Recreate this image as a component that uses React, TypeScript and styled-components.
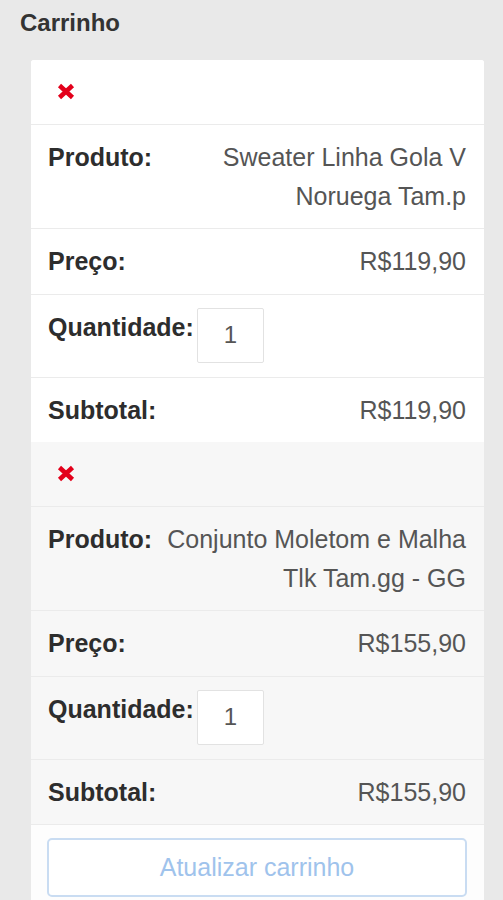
import React from "react";
import styled, {createGlobalStyle} from "styled-components";

const GlobalStyle = createGlobalStyle`
	html, body {
		margin: 0;
		padding: 0;
		background: #e9e9e9;
	}
	body {
		font-family: "Liberation Sans", Arial, sans-serif;
		color: #555;
	}
`;

const Page = styled.main`
	padding: 9px 19px 0 20px;
`;

const Title = styled.h2`
	margin: 0 0 23px;
	font-size: 24px;
	line-height: 28px;
	font-weight: 700;
	color: #333;
`;

const Card = styled.section`
	margin-left: 11px;
	background: #fff;
	border-radius: 3px;
	overflow: hidden;
`;

const Item = styled.div<{$striped?: boolean}>`
	background: ${({$striped}) => ($striped ? "#f7f7f7" : "#fff")};
	& + & > div:first-child {
		border-top: 1px solid #ebebeb;
	}
`;

const Row = styled.div<{$start?: boolean}>`
	display: flex;
	justify-content: ${({$start}) => ($start ? "flex-start" : "space-between")};
	align-items: flex-start;
	gap: ${({$start}) => ($start ? "3px" : "11px")};
	padding: 13px 18px ${({$start}) => ($start ? "14px" : "13px")} 17px;
	font-size: 25px;
	line-height: 38px;
	& + & {
		border-top: 1px solid #ebebeb;
	}
`;

const RemoveRow = styled(Row)`
	align-items: center;
	padding-top: 11px;
	padding-bottom: 14px;
	&:first-child {
		padding-top: 12px;
	}
`;

const Label = styled.span`
	flex: none;
	font-weight: 700;
	color: #2d2d2d;
`;

const Value = styled.span`
	flex: 0 1 auto;
	text-align: right;
	line-height: 38.5px;
	color: #555;
`;

const RemoveLink = styled.a`
	display: flex;
	align-items: center;
	height: 38px;
	margin-left: 9px;
	color: #e3001b;
	cursor: pointer;
`;

const QtyInput = styled.input`
	box-sizing: border-box;
	width: 67px;
	height: 55px;
	border: 1px solid #e2e2e2;
	border-radius: 2px;
	background: #fff;
	font-family: inherit;
	font-size: 24px;
	color: #555;
	text-align: center;
	padding: 0;
`;

const Actions = styled.div`
	border-top: 1px solid #ebebeb;
	padding: 13px 17px 14px 16px;
	background: #fdfdfd;
`;

const UpdateButton = styled.button`
	box-sizing: border-box;
	width: 100%;
	height: 59px;
	border: 2px solid #c9dcf2;
	border-radius: 5px;
	background: #fff;
	color: #9fc3ec;
	font-family: inherit;
	font-size: 25px;
	cursor: not-allowed;
`;

const RemoveIcon = () => (
	<svg width="18" height="17" viewBox="0 0 18 17">
		<path d="M2.5 2.5 L15.5 14.5 M15.5 2.5 L2.5 14.5" stroke="currentColor" strokeWidth="4.6" />
	</svg>
);

interface CartItem {
	name: string;
	price: string;
	qty: number;
	subtotal: string;
}

const items: CartItem[] = [
	{name: "Sweater Linha Gola V Noruega Tam.p", price: "R$119,90", qty: 1, subtotal: "R$119,90"},
	{name: "Conjunto Moletom e Malha Tlk Tam.gg - GG", price: "R$155,90", qty: 1, subtotal: "R$155,90"}
];

export default function App() {
	return (
		<>
			<GlobalStyle />
			<Page>
				<Title>Carrinho</Title>
				<Card>
					{items.map((item, i) => (
						<Item key={item.name} $striped={i % 2 === 1}>
							<RemoveRow>
								<RemoveLink aria-label="Remover este item">
									<RemoveIcon />
								</RemoveLink>
							</RemoveRow>
							<Row>
								<Label>Produto:</Label>
								<Value>{item.name}</Value>
							</Row>
							<Row>
								<Label>Preço:</Label>
								<Value>{item.price}</Value>
							</Row>
							<Row $start>
								<Label>Quantidade:</Label>
								<QtyInput type="text" defaultValue={item.qty} />
							</Row>
							<Row>
								<Label>Subtotal:</Label>
								<Value>{item.subtotal}</Value>
							</Row>
						</Item>
					))}
					<Actions>
						<UpdateButton disabled>Atualizar carrinho</UpdateButton>
					</Actions>
				</Card>
			</Page>
		</>
	);
}
